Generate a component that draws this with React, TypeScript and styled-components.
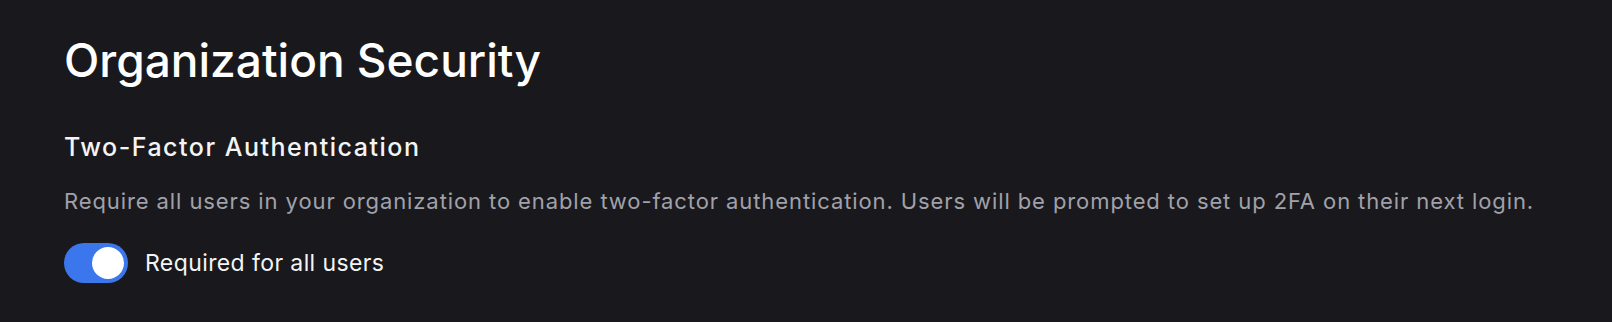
import React, { useState } from "react";
import styled, { createGlobalStyle } from "styled-components";

const GlobalStyle = createGlobalStyle`
  html, body {
    margin: 0;
    padding: 0;
    background: #19191d;
  }
  body {
    font-family: Inter, "Noto Sans", sans-serif;
    -webkit-font-smoothing: antialiased;
  }
`;

const Page = styled.main`
  min-height: 322px;
  box-sizing: border-box;
  padding: 28px 64px 0;
  background: #19191d;
  color: #ffffff;
`;

const Title = styled.h1`
  margin: 0;
  font-size: 46px;
  font-weight: 500;
  line-height: 64px;
  letter-spacing: 0;
  color: #ffffff;
`;

const Section = styled.section`
  display: flex;
  flex-direction: column;
  margin-top: 39px;
`;

const SectionTitle = styled.h2`
  margin: 0;
  font-size: 25px;
  font-weight: 500;
  line-height: 32px;
  letter-spacing: 1.5px;
  color: #f4f4f5;
`;

const Description = styled.p`
  margin: 23px 0 0;
  font-size: 22px;
  font-weight: 400;
  line-height: 30px;
  letter-spacing: 0.9px;
  color: #a1a1aa;
`;

const ToggleRow = styled.label`
  display: flex;
  align-items: center;
  gap: 17px;
  margin-top: 27px;
  cursor: pointer;
`;

const Track = styled.button<{ $on: boolean }>`
  display: flex;
  align-items: center;
  justify-content: ${(p) => (p.$on ? "flex-end" : "flex-start")};
  flex-shrink: 0;
  width: 64px;
  height: 40px;
  padding: 4px;
  box-sizing: border-box;
  border: none;
  border-radius: 20px;
  background: ${(p) => (p.$on ? "#3b76ec" : "#3f3f46")};
  cursor: pointer;
`;

const Knob = styled.span`
  width: 32px;
  height: 32px;
  border-radius: 50%;
  background: #ffffff;
`;

const ToggleLabel = styled.span`
  font-size: 23px;
  font-weight: 400;
  line-height: 30px;
  letter-spacing: 0.4px;
  color: #f4f4f5;
`;

export default function App() {
  const [on, setOn] = useState(true);
  return (
    <>
      <GlobalStyle />
      <Page>
        <Title>Organization Security</Title>
        <Section>
          <SectionTitle>Two-Factor Authentication</SectionTitle>
          <Description>
            Require all users in your organization to enable two-factor authentication. Users will be prompted to set up 2FA on their next login.
          </Description>
          <ToggleRow>
            <Track $on={on} role="switch" aria-checked={on} onClick={() => setOn(!on)}>
              <Knob />
            </Track>
            <ToggleLabel>Required for all users</ToggleLabel>
          </ToggleRow>
        </Section>
      </Page>
    </>
  );
}
